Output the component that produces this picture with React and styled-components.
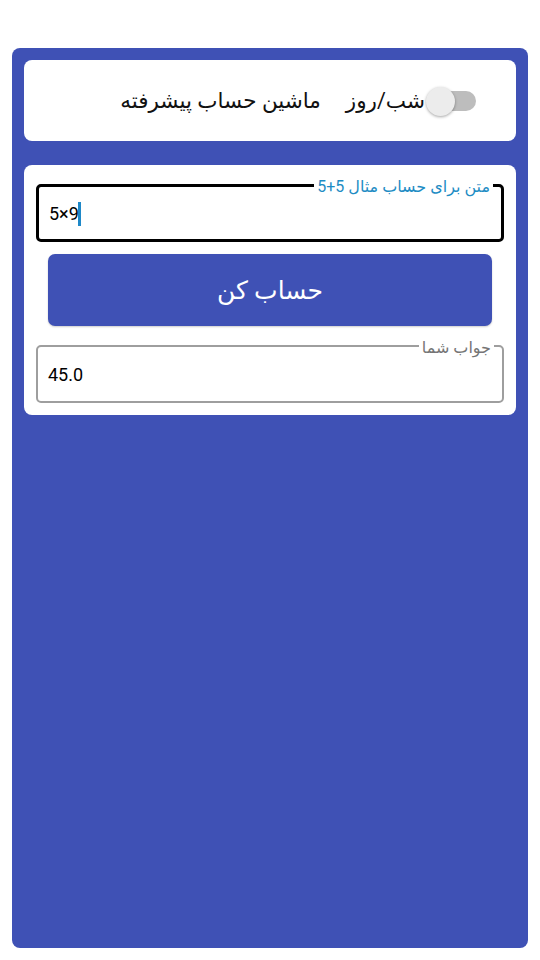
import React, { useState } from "react";
import styled, { createGlobalStyle } from "styled-components";

const Global = createGlobalStyle`
  html, body { margin: 0; padding: 0; background: #ffffff; }
  body { font-family: Roboto, "DejaVu Sans", "Noto Sans", sans-serif; }
  * { box-sizing: border-box; }
`;

const Screen = styled.div`
  margin: 48px 12px 12px;
  height: 900px;
  background: #3f51b5;
  border-radius: 8px;
  padding: 12px;
  display: flex;
  flex-direction: column;
  gap: 24px;
`;

const Card = styled.div`
  background: #ffffff;
  border-radius: 8px;
  direction: rtl;
`;

const HeaderCard = styled(Card)`
  height: 81px;
  display: flex;
  align-items: center;
  padding: 0 40px 0 0;
  gap: 25px;
`;

const SwitchLabel = styled.label`
  display: flex;
  align-items: center;
  font-size: 21.5px;
  color: #111;
  cursor: pointer;
`;

const Track = styled.span`
  position: relative;
  width: 46px;
  height: 20px;
  border-radius: 10px;
  background: ${(p) => (p.$on ? "#9fa8da" : "#bdbdbd")};
  margin-left: 5px;
  flex-shrink: 0;
`;

const Thumb = styled.span`
  position: absolute;
  top: -4px;
  right: ${(p) => (p.$on ? "-2px" : "21px")};
  width: 29px;
  height: 29px;
  border-radius: 50%;
  background: ${(p) => (p.$on ? "#3f51b5" : "#ececec")};
  box-shadow: 0 1px 3px rgba(0, 0, 0, 0.35);
`;

const Title = styled.span`
  font-size: 21.5px;
  color: #111;
`;

const FormCard = styled(Card)`
  padding: 12px 12px 12px;
  display: flex;
  flex-direction: column;
`;

const Field = styled.fieldset`
  margin: ${(p) => p.$mt || "0"} 0 0;
  padding: 0 10px;
  min-width: 0;
  height: 65px;
  border: ${(p) => (p.$focused ? "3px solid #000" : "2px solid #9e9e9e")};
  border-radius: 5px;
`;

const Legend = styled.legend`
  padding: 0 3px;
  margin-right: -2px;
  font-size: 16px;
  line-height: 16px;
  color: ${(p) => p.$color};
`;

const LegendText = styled.span`
  position: relative;
  top: 2px;
`;

const Value = styled.div`
  direction: ltr;
  text-align: left;
  width: 100%;
  font-family: Roboto, "Liberation Sans", sans-serif;
  font-size: 18px;
  line-height: 42px;
  height: 42px;
  color: #000;
  white-space: nowrap;
`;

const Caret = styled.span`
  display: inline-block;
  width: 3px;
  height: 24px;
  background: #1e88c8;
  vertical-align: middle;
  margin-left: -1px;
  margin-top: -3px;
`;

const Button = styled.button`
  margin: 12px 12px 0;
  height: 72px;
  border: none;
  border-radius: 7px;
  background: #3f51b5;
  color: #fff;
  font-family: Roboto, "DejaVu Sans", sans-serif;
  font-size: 25px;
  box-shadow: 0 1px 2px rgba(0, 0, 0, 0.2);
  cursor: pointer;
`;

export default function App() {
  const [night, setNight] = useState(false);
  return (
    <>
      <Global />
      <Screen>
        <HeaderCard>
          <SwitchLabel onClick={() => setNight(!night)}>
            <Track $on={night}>
              <Thumb $on={night} />
            </Track>
            <span>شب/روز</span>
          </SwitchLabel>
          <Title>ماشین حساب پیشرفته</Title>
        </HeaderCard>
        <FormCard>
          <Field $focused>
            <Legend $color="#1e8cc4">
              <LegendText>متن برای حساب مثال 5+5</LegendText>
            </Legend>
            <Value>
              5×9
              <Caret />
            </Value>
          </Field>
          <Button>حساب کن</Button>
          <Field $mt="12px">
            <Legend $color="#757575">
              <LegendText>جواب شما</LegendText>
            </Legend>
            <Value>45.0</Value>
          </Field>
        </FormCard>
      </Screen>
    </>
  );
}
